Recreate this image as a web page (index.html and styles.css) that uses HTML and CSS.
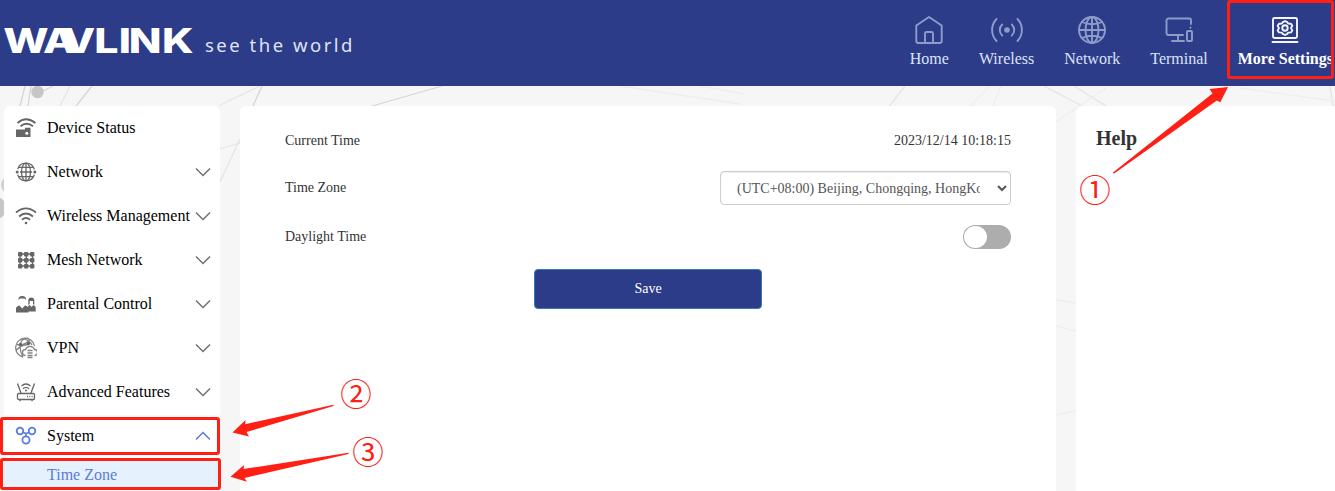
FILE: index.html
```html
<!DOCTYPE html>
<html lang="en">
<head>
<meta charset="utf-8">
<title>WAVLINK - Time Zone</title>
<link rel="stylesheet" href="styles.css">
</head>
<body>
<svg class="backdrop" viewBox="0 0 1335 491" fill="none" stroke="#e4e4e4">
  <g stroke-width="1.300">
    <path d="M25 86L20 106M31 86l-3 20M92 86L76 106M43 91l10-5M262 86l-9 20M442 86l-70 20" stroke="#d6d6d6"/>
    <path d="M70 86L60 106M260 86L220 105M905 86l-17 22M1044 86l38 20M1074 86l32 20M1330 86l3 20M220 149l20-6M240 139L220 182"/>
    <path d="M620 86l120 18M700 86l45 8M990 86l-20 20M1001 86l-8 20M1106 88L1056 122M1240 88l95 13M1056 300l20 3M1056 326l20 5M1056 415l20-4" stroke="#eeeeee"/>
  </g>
  <circle cx="37.500" cy="92" r="6.200" fill="#c6c6c6" stroke="none"/>
  <circle cx="9" cy="185" r="8" fill="#cfcfcf" stroke="none"/>
  <circle cx="-6" cy="208" r="12" fill="#c6c6c6" stroke="none"/>
</svg>

<header class="topbar">
  <div class="brand">
    <svg class="wordmark" width="192" height="30" viewBox="0 0 192 30">
      <text class="wordmark-text" transform="scale(1.28 1)" x="-.5 30.500 45.500 70.500 89.700 97.500 123.500" y="27">WAVLINK</text>
    </svg>
    <span class="tagline">see the world</span>
  </div>
  <nav class="nav">
    <a class="nav-item">
      <svg width="30" height="30" viewBox="0 0 30 30"><path d="M2.300 10.500L15 2l12.700 8.500V26a2 2 0 0 1-2 2H4.300a2 2 0 0 1-2-2zM11 28v-9.500a1.500 1.500 0 0 1 1.500-1.500h5a1.500 1.500 0 0 1 1.500 1.500V28"/></svg>
      <span>Home</span>
    </a>
    <a class="nav-item">
      <svg width="34" height="30" viewBox="0 0 34 30"><circle cx="17" cy="15" r="2.800" class="solid"/><path d="M12.200 9.500a7.500 7.500 0 0 0 0 11M21.800 9.500a7.500 7.500 0 0 1 0 11M6.500 4a16 16 0 0 0 0 22M27.500 4a16 16 0 0 1 0 22"/></svg>
      <span>Wireless</span>
    </a>
    <a class="nav-item">
      <svg width="30" height="30" viewBox="0 0 30 30"><circle cx="15" cy="15" r="13"/><ellipse cx="15" cy="15" rx="6.500" ry="13"/><path d="M15 2v26M2 15h26M5 7q10 4.500 20 0M5 23q10-4.500 20 0"/></svg>
      <span>Network</span>
    </a>
    <a class="nav-item">
      <svg width="30" height="30" viewBox="0 0 30 30"><path d="M19 20H4.500A2 2 0 0 1 2.500 18V5.500a2 2 0 0 1 2-2h21a1.500 1.500 0 0 1 1.500 1.500v4M14 20v6M8 26h12M26.500 12.500v.2"/><rect x="23" y="16" width="5" height="10" rx="1"/></svg>
      <span>Terminal</span>
    </a>
    <a class="nav-item nav-item-active">
      <svg width="30" height="30" viewBox="0 0 30 30"><rect x="3" y="3" width="24" height="20" rx="1.500"/><path d="M2.500 27h25M15 6.200l2.300 1 1 1.400 2.700.1 1.300 2.100-1.300 2.300 1.300 2.300-1.300 2-2.700.2-1 1.300-2.300 1.100-2.300-1.100-1-1.300-2.700-.2-1.300-2L9 13.100l-1.300-2.300L9 8.700l2.700-.1 1-1.400z"/><circle cx="15" cy="13" r="2.700"/></svg>
      <span>More Settings</span>
    </a>
  </nav>
</header>

<main class="layout">
  <aside class="sidebar">
    <a class="menu-item">
      <svg class="menu-icon" viewBox="0 0 22 22"><path class="fill" d="M1 12.500h9V10.800h5.500v9.200H1z"/><circle cx="11.800" cy="16.200" r="1.500" fill="#fff" stroke="none"/><path d="M2.500 6Q11-1.500 20.500 6M5.500 9.300q6-5 12.500 0"/></svg>
      <span>Device Status</span>
    </a>
    <a class="menu-item">
      <svg class="menu-icon thin" viewBox="0 0 22 22"><circle cx="11" cy="11" r="8.800" stroke-dasharray="22 5.600" stroke-dashoffset="-2.800"/><ellipse cx="11" cy="11" rx="4.500" ry="8.800"/><path d="M11 2v18M5 11h12M4 6.300h14M4 15.700h14"/><g class="fill"><circle cx="2.200" cy="11" r="1.500"/><circle cx="19.800" cy="11" r="1.500"/></g></svg>
      <span>Network</span>
      <svg class="chevron" viewBox="0 0 16 10"><path d="M1 1.500l7 7 7-7"/></svg>
    </a>
    <a class="menu-item">
      <svg class="menu-icon" viewBox="0 0 22 22"><path d="M1 7.500Q11-.8 21 7.500M4 11.500q7-6 14 0M7 14.700q4-3.300 8 0"/><circle class="fill" cx="11" cy="18" r="1.300"/></svg>
      <span>Wireless Management</span>
      <svg class="chevron" viewBox="0 0 16 10"><path d="M1 1.500l7 7 7-7"/></svg>
    </a>
    <a class="menu-item">
      <svg class="menu-icon thin" viewBox="0 0 22 22"><path d="M5 5h13M5 11h13M5 17h13M5 5v13M11.300 5v13M17.500 5v13"/><g class="fill"><rect x="3" y="3" width="4.400" height="4.400" rx="1"/><rect x="9" y="3" width="4.400" height="4.400" rx="1"/><rect x="15" y="3" width="4.400" height="4.400" rx="1"/><rect x="3" y="9" width="4.400" height="4.400" rx="1"/><rect x="9" y="9" width="4.400" height="4.400" rx="1"/><rect x="15" y="9" width="4.400" height="4.400" rx="1"/><rect x="3" y="15" width="4.400" height="4.400" rx="1"/><rect x="9" y="15" width="4.400" height="4.400" rx="1"/><rect x="15" y="15" width="4.400" height="4.400" rx="1"/></g></svg>
      <span>Mesh Network</span>
      <svg class="chevron" viewBox="0 0 16 10"><path d="M1 1.500l7 7 7-7"/></svg>
    </a>
    <a class="menu-item">
      <svg class="menu-icon thin" viewBox="0 0 22 22"><path class="fill" d="M1 19.500v-4q0-2 3.500-3l2.700 3 2.700-3q3.600 1 3.600 3v4z"/><path class="fill" d="M13 18.500v-3.500l.3-2.300 1.200-.7 2 2 2-2q2.200 1 2.200 2.500v4z"/><path class="fill" d="M3.500 7Q3 3 7.200 3T11 7L9.500 5.500H5zM13.300 12V7.500q0-3 3-3t3 3V12l-1.300-1V8h-3.300v3z"/></svg>
      <span>Parental Control</span>
      <svg class="chevron" viewBox="0 0 16 10"><path d="M1 1.500l7 7 7-7"/></svg>
    </a>
    <a class="menu-item">
      <svg class="menu-icon thin vpn" viewBox="0 0 22 22"><path d="M8 20A9.500 9.500 0 1 1 19.500 9M8 20Q4 13 5.500 7T13 1.500M2 7.500q8 1.500 13-5M1.500 13q4-5 12-5.500M9 2q6 2 8 6"/><g class="fill"><circle cx="5.500" cy="7.500" r="1.700"/><circle cx="13.500" cy="6.500" r="1.700"/></g><path d="M10.500 18.500a3 3 0 0 1 0-6 4.800 4.800 0 0 1 9 0 3 3 0 0 1 0 6M12.500 13.500h5M12.500 16h5M12.500 18.500h5M12.500 20.500h5"/></svg>
      <span>VPN</span>
      <svg class="chevron" viewBox="0 0 16 10"><path d="M1 1.500l7 7 7-7"/></svg>
    </a>
    <a class="menu-item">
      <svg class="menu-icon thin" viewBox="0 0 22 22"><rect x="2.500" y="12.500" width="17" height="6" rx="1.200"/><path d="M2.500 2.500L6 12M19.500 2.500L16 12M6.500 5q4.500-4 9 0M8 7.700q3-2.700 6 0M5 18.500v1.800M17 18.500v1.800M12 15.500h1M14.300 15.500h1M16.600 15.500h1"/><circle class="fill" cx="11" cy="9.500" r="1"/></svg>
      <span>Advanced Features</span>
      <svg class="chevron" viewBox="0 0 16 10"><path d="M1 1.500l7 7 7-7"/></svg>
    </a>
    <a class="menu-item menu-item-open">
      <svg class="menu-icon" viewBox="0 0 22 22"><circle cx="5" cy="6" r="3.300"/><circle cx="17" cy="6" r="3.300"/><circle cx="11" cy="15" r="3.600"/><path d="M8.200 7.500l2.800 1 2.800-1M11 8.500v3"/></svg>
      <span>System</span>
      <svg class="chevron" viewBox="0 0 16 10"><path d="M1 8.500l7-7 7 7"/></svg>
    </a>
    <a class="submenu-item">Time Zone</a>
  </aside>

  <section class="card settings">
    <div class="row row-time">
      <span>Current Time</span>
      <span>2023/12/14 10:18:15</span>
    </div>
    <div class="row row-zone">
      <label for="zone">Time Zone</label>
      <select id="zone" class="zone-select"><option>(UTC+08:00) Beijing, Chongqing, HongKong, Urumqi</option></select>
    </div>
    <div class="row row-daylight">
      <span>Daylight Time</span>
      <span class="switch"><span class="knob"></span></span>
    </div>
    <button class="save">Save</button>
  </section>

  <aside class="card help">
    <h2 class="help-title">Help</h2>
  </aside>
</main>

<div class="callouts">
  <svg class="marks" viewBox="0 0 1335 491">
    <g class="frames">
      <rect x="1228.500" y="1.500" width="104" height="76" rx="1.500"/>
      <rect x="1.500" y="418.500" width="217" height="35" rx="1.500"/>
      <rect x="1.500" y="459.500" width="218" height="29" rx="1.500"/>
    </g>
    <g class="arrows">
      <path d="M1228 87l-18.500 2 3 4.500L1113 172.500l.8 1.200 103-73.200 3.500 1.800z"/>
      <path d="M232.500 432.500l13-12.500-.3 4.200L333.500 404.700v1.300L246.500 432l2.500 4.500z"/>
      <path d="M230.500 476.700l13.500-11.700-.4 4L348.500 452.700v1.300L244.500 478l2.500 3.800z"/>
    </g>
    <g class="digits">
      <text x="1095" y="202">①</text>
      <text x="356" y="405.500">②</text>
      <text x="368" y="463.500">③</text>
    </g>
  </svg>
</div>
</body>
</html>
```
FILE: styles.css
```css
* { box-sizing: border-box; }
body {
  margin: 0;
  height: 491px;
  overflow: hidden;
  position: relative;
  background: #f6f6f6;
  font-family: "Liberation Serif", "Times New Roman", serif;
  font-size: 16px;
  color: #000;
}
.backdrop, .callouts { position: absolute; left: 0; top: 0; width: 1335px; height: 491px; pointer-events: none; }
.backdrop { z-index: -1; }

.topbar {
  display: flex;
  justify-content: space-between;
  height: 86px;
  padding: 0 2px 0 4px;
  background: #2d3c88;
}
.brand { display: flex; align-items: flex-start; gap: 9px; padding-top: 26px; }
.wordmark { display: block; overflow: visible; }
.wordmark-text { font: 800 33.500px Inter, sans-serif; fill: #fff; }
.tagline {
  padding-top: 5px;
  font: 400 18.500px/28px "Noto Sans", "Open Sans", sans-serif;
  letter-spacing: 2.500px;
  color: #dfe4f4;
  white-space: nowrap;
}
.nav { display: flex; gap: 30px; padding-top: 15px; }
.nav-item {
  display: flex;
  flex-direction: column;
  align-items: center;
  gap: 4px;
  line-height: 20px;
  white-space: nowrap;
  color: #dbe3fa;
}
.nav-item svg { fill: none; stroke: #8d9cc8; stroke-width: 1.900; stroke-linecap: round; stroke-linejoin: round; }
.nav-item .solid { fill: #8d9cc8; stroke: none; }
.nav-item-active { font-weight: bold; color: #fff; }
.nav-item-active svg { stroke: #f4f6ff; }

.layout {
  display: grid;
  grid-template-columns: 216px 816px 1fr;
  column-gap: 20px;
  height: 405px;
  padding: 20px 0 0 4px;
}
.sidebar { background: #fff; border-radius: 6px 6px 0 0; }
.menu-item { display: flex; align-items: center; height: 44px; padding: 0 9px 0 11px; white-space: nowrap; }
.menu-item span { flex: 1; margin-left: 10px; }
.menu-icon { flex: none; width: 22px; height: 22px; fill: none; stroke: #666; stroke-width: 1.800; }
.menu-icon.thin { stroke-width: 1.300; }
.menu-icon.vpn { stroke: #858585; }
.menu-icon .fill { fill: #666; stroke: none; }
.chevron { flex: none; width: 16px; height: 10px; fill: none; stroke: #707070; stroke-width: 1.500; }
.menu-item-open .menu-icon, .menu-item-open .chevron { stroke: #5b7cd9; }
.submenu-item {
  display: block;
  height: 33px;
  padding-left: 43px;
  line-height: 34px;
  background: #e5f1fc;
  color: #5b7cd9;
}

.card { background: #fff; border-radius: 6px 6px 0 0; }
.settings { display: flex; flex-direction: column; padding: 18px 45px 0; font-size: 14px; color: #333; }
.row { display: flex; justify-content: space-between; align-items: center; }
.row-time { height: 34px; }
.row-zone { height: 60px; }
.row-daylight { height: 38px; }
.zone-select {
  width: 291px;
  height: 34px;
  padding: 6px 14px 6px 12px;
  border: 1px solid #ccc;
  border-radius: 4px;
  background: #fff;
  box-shadow: inset 0 1px 1px rgba(0, 0, 0, .075);
  font: 14px "Liberation Serif", serif;
  color: #555;
}
.switch { display: flex; width: 48px; height: 24px; padding: 1px; border-radius: 12px; background: #adadad; }
.knob { width: 23px; height: 22px; border-radius: 50%; background: #fff; }
.save {
  align-self: center;
  width: 228px;
  height: 40px;
  margin-top: 13px;
  border: 1px solid #337ab7;
  border-radius: 4px;
  background: #2d3c88;
  font: 14px "Liberation Serif", serif;
  color: #fff;
}
.help { border-top-right-radius: 0; padding: 20px; }
.help-title { margin: 0; font-size: 20px; line-height: 24px; color: #333; }

.marks { display: block; width: 1335px; height: 491px; }
.frames { fill: none; stroke: #ff2015; stroke-width: 3; }
.arrows { fill: #ff2015; }
.digits { fill: #ff2015; font: 31.500px "Noto Sans CJK SC", sans-serif; text-anchor: middle; }
```
